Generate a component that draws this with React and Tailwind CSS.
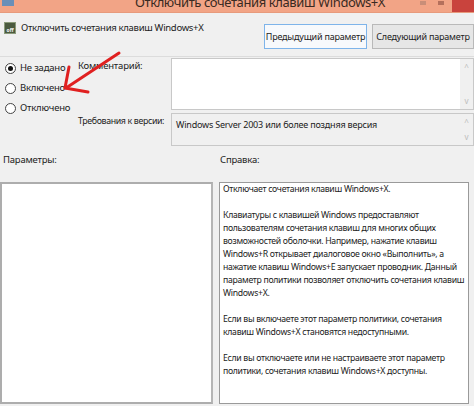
import React from 'react';

const font = { fontFamily: '"Noto Sans", "Open Sans", sans-serif' };

const Radio = ({ checked, label }) => (
  <div className="flex items-center gap-[4px] h-[20px]">
    <span className="w-[11px] h-[11px] rounded-full border border-[#444] bg-white flex items-center justify-center">
      {checked && <span className="w-[5px] h-[5px] rounded-full bg-[#111]" />}
    </span>
    <span className="text-[9.5px] tracking-[-0.2px] text-[#222]">{label}</span>
  </div>
);

const ScrollArrows = () => (
  <div className="w-[13px] flex flex-col justify-between items-center text-[#bbb] text-[8px] leading-none py-[4px] bg-[#f0f0f0]">
    <span>^</span>
    <span>v</span>
  </div>
);

const helpText = [
  'Отключает сочетания клавиш Windows+X.',
  '',
  'Клавиатуры с клавишей Windows предоставляют',
  'пользователям сочетания клавиш для многих общих',
  'возможностей оболочки. Например, нажатие клавиш',
  'Windows+R открывает диалоговое окно «Выполнить», а',
  'нажатие клавиш Windows+E запускает проводник. Данный',
  'параметр политики позволяет отключить сочетания клавиш',
  'Windows+X.',
  '',
  'Если вы включаете этот параметр политики, сочетания',
  'клавиш Windows+X становятся недоступными.',
  '',
  'Если вы отключаете или не настраиваете этот параметр',
  'политики, сочетания клавиш Windows+X доступны.',
];

export default function App() {
  return (
    <div className="relative w-[474px] h-[406px] bg-[#f0f0f0] overflow-hidden flex flex-col" style={font}>
      {/* title bar */}
      <div className="h-[13px] bg-[#f2a486] flex items-start overflow-hidden border-b border-[#e79a7c]">
        <div className="w-[12px] h-[6px] ml-[2px] bg-[#6a8fb8]" />
        <div className="w-[121px]" />
        <div className="text-[13px] tracking-[-0.4px] text-[#3a2a22] leading-[16px] -mt-[6px] whitespace-nowrap">
          Отключить сочетания клавиш Windows+X
        </div>
        <div className="ml-auto flex items-start self-stretch">
          <span className="w-[6px] h-[4px] bg-[#c98e78] mr-[12px] mt-[1px]" />
          <span className="w-[6px] h-[4px] bg-[#b5705c] mr-[8px] mt-[1px]" />
          <span className="w-[22px] h-full bg-[#c9433d]" />
        </div>
      </div>

      {/* header */}
      <div className="h-[44px] flex items-center border-b border-[#dcdcdc]">
        <div className="flex items-center gap-[5px] pl-[4px] self-start mt-[8px]">
          <div className="w-[12px] h-[12px] bg-[#4b5a3f] border border-[#8a9a7a] flex items-end justify-center">
            <span className="text-[5px] text-white font-bold leading-none">off</span>
          </div>
          <span className="text-[9.5px] tracking-[-0.3px] text-[#222]">Отключить сочетания клавиш Windows+X</span>
        </div>
        <div className="ml-auto flex gap-[5px] mt-[4px]">
          <div className="w-[103px] h-[25px] border border-[#7eb4ea] bg-[#f7f9fc] flex items-center justify-center text-[9px] tracking-[-0.2px] text-[#222] whitespace-nowrap">
            Предыдущий параметр
          </div>
          <div className="w-[102px] h-[25px] border border-[#b9b9b9] bg-[#e6e6e6] flex items-center justify-center text-[9px] tracking-[-0.2px] text-[#222] whitespace-nowrap">
            Следующий параметр
          </div>
        </div>
      </div>

      {/* state + comment */}
      <div className="flex pt-[1px]">
        <div className="w-[78px] pl-[5px]">
          <Radio checked label="Не задано" />
          <Radio label="Включено" />
          <Radio label="Отключено" />
        </div>
        <div className="flex-1 flex flex-col gap-[3px]">
          <div className="flex">
            <div className="w-[93px] text-[9.5px] tracking-[-0.2px] text-[#222] pt-[1px] whitespace-nowrap">Комментарий:</div>
            <div className="flex-1 h-[52px] border border-[#c8c8c8] bg-white flex">
              <div className="flex-1" />
              <ScrollArrows />
            </div>
          </div>
          <div className="flex">
            <div className="w-[93px] text-[8.8px] tracking-[-0.35px] text-[#222] pt-[2px] whitespace-nowrap">Требования к версии:</div>
            <div className="flex-1 h-[33px] border border-[#c8c8c8] bg-[#f0f0f0] flex">
              <div className="flex-1 text-[9px] tracking-[-0.2px] text-[#222] pl-[4px] pt-[4px] whitespace-nowrap">
                Windows Server 2003 или более поздняя версия
              </div>
              <ScrollArrows />
            </div>
          </div>
        </div>
      </div>

      {/* labels */}
      <div className="flex mt-[7px] h-[29px]">
        <div className="w-[220px] pl-[3px] text-[9.5px] tracking-[-0.2px] text-[#222]">Параметры:</div>
        <div className="text-[9.5px] tracking-[-0.2px] text-[#222]">Справка:</div>
      </div>

      {/* panes */}
      <div className="flex-1 flex pb-[2px] gap-[6px]">
        <div className="w-[213px] bg-white border-2 border-[#adadad] border-r-[#b5b5b5]" />
        <div className="w-[250px] bg-white border border-[#9a9a9a] pl-[3px] text-[8.7px] tracking-[-0.3px] leading-[13px] text-[#222] whitespace-nowrap overflow-hidden">
          {helpText.map((l, i) => (
            <div key={i} className="h-[13px]">{l}</div>
          ))}
        </div>
      </div>

      {/* red hand-drawn arrow */}
      <svg className="absolute left-0 top-0 pointer-events-none" width="474" height="406">
        <path d="M119 53 L66 88" stroke="#e02020" strokeWidth="3" strokeLinecap="round" fill="none" />
        <path d="M69 67 L65 88 L88 92" stroke="#e02020" strokeWidth="3" strokeLinecap="round" strokeLinejoin="round" fill="none" />
      </svg>
    </div>
  );
}
